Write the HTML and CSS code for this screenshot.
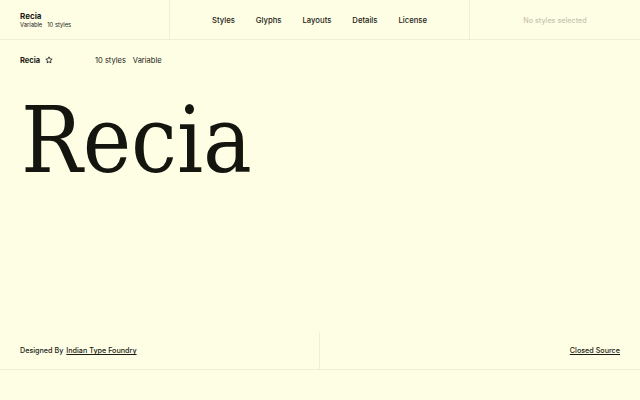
FILE: index.html
```html
<!DOCTYPE html>
<html>
<head>
<meta charset="utf-8">
<link rel="stylesheet" href="styles.css">
</head>
<body>
<div class="page">
  <header class="topbar">
    <div class="brand">
      <div class="brand-name">Recia</div>
      <div class="brand-meta"><span>Variable</span><span>10 styles</span></div>
    </div>
    <nav class="nav">
      <a>Styles</a><a>Glyphs</a><a>Layouts</a><a>Details</a><a>License</a>
    </nav>
    <div class="selection">No styles selected</div>
  </header>
  <div class="info">
    <div class="info-name">
      <b>Recia</b>
      <svg class="star" width="8" height="8" viewBox="0 0 24 24"><path d="M12 2.5l2.9 6.1 6.6.8-4.9 4.6 1.3 6.6L12 17.3l-5.9 3.3 1.3-6.6-4.9-4.6 6.6-.8z" fill="none" stroke="#222" stroke-width="2.6" stroke-linejoin="round"/></svg>
    </div>
    <div class="info-meta"><span>10 styles</span><span>Variable</span></div>
  </div>
  <div class="hero">Recia</div>
  <div class="spacer"></div>
  <footer class="footer">
    <div class="credit">Designed By <a>Indian Type Foundry</a></div>
    <div class="source"><a>Closed Source</a></div>
  </footer>
</div>
</body>
</html>
```
FILE: styles.css
```css
html, body { margin: 0; padding: 0; }
body {
  background: #fefee5;
  color: #1a1a14;
  font-family: Inter, "Liberation Sans", sans-serif;
}
.page {
  height: 400px;
  display: flex;
  flex-direction: column;
}
.topbar {
  display: grid;
  grid-template-columns: 170px 300px 170px;
  height: 39px;
  border-bottom: 1px solid #efeed6;
}
.brand {
  border-right: 1px solid #efeed6;
  padding: 11px 0 0 20px;
}
.brand-name { font-size: 8px; font-weight: 700; line-height: 10px; }
.brand-meta { font-size: 5.8px; line-height: 8px; display: flex; gap: 5px; }
.nav {
  display: flex;
  justify-content: center;
  align-items: center;
  gap: 21px;
  font-size: 7.7px;
  font-weight: 500;
  padding-top: 1px;
  border-right: 1px solid #efeed6;
}
.selection {
  display: flex;
  align-items: center;
  justify-content: center;
  font-size: 7.2px;
  font-weight: 500;
  padding-top: 1px;
  color: #c6c5ae;
}
.info {
  display: flex;
  align-items: center;
  padding: 14px 0 0 20px;
  height: 12px;
  font-size: 7.5px;
}
.info-name { width: 75px; display: flex; align-items: center; gap: 5px; }
.info-name b { font-weight: 700; }
.info-meta { display: flex; gap: 7px; }
.hero {
  font-family: "DejaVu Serif Condensed", "DejaVu Serif", serif;
  font-stretch: condensed;
  font-size: 91px;
  line-height: 1;
  padding: 29px 0 0 21px;
  letter-spacing: 0;
  color: #15150f;
}
.spacer { flex: 1; }
.footer {
  display: grid;
  grid-template-columns: 1fr 1fr;
  height: 37px;
  border-bottom: 1px solid #efeed6;
  margin-bottom: 30px;
  font-size: 7.2px;
  font-weight: 500;
}
.credit {
  display: flex;
  align-items: center;
  padding-left: 20px;
  border-right: 1px solid #efeed6;
}
.credit a { margin-left: 3px; text-decoration: underline; }
.source {
  display: flex;
  align-items: center;
  justify-content: flex-end;
  padding-right: 20px;
}
.source a { text-decoration: underline; }
```
